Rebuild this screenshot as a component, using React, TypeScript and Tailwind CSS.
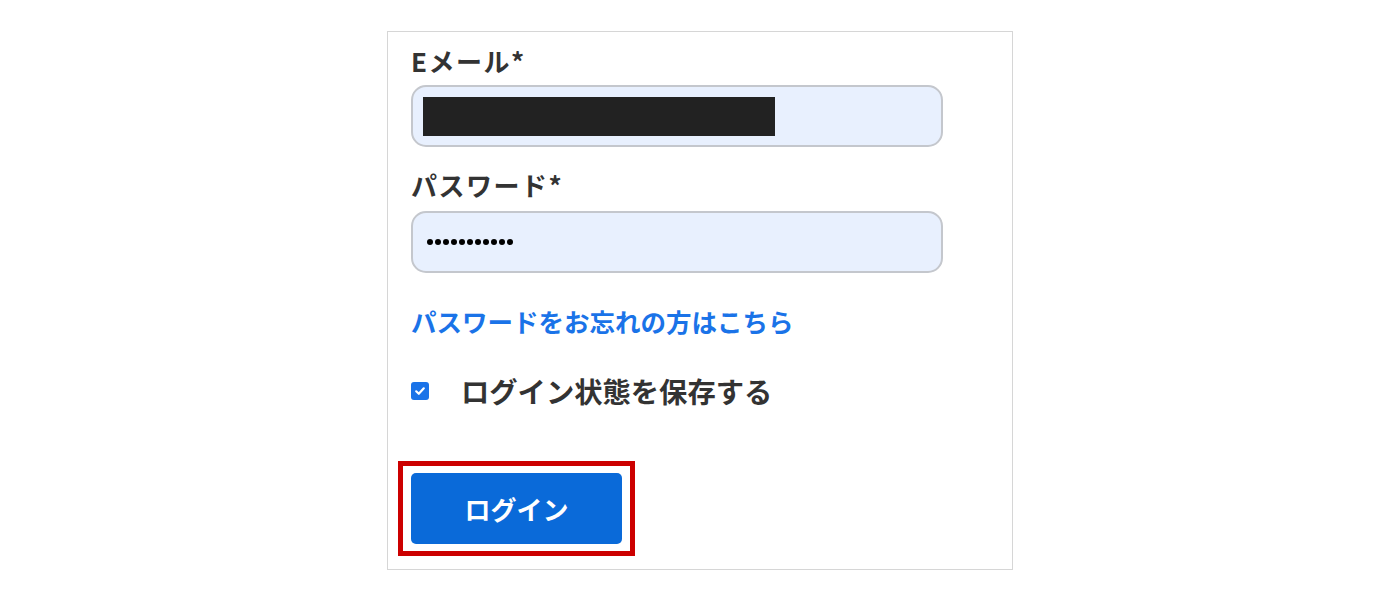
import React from "react";

export default function App() {
  return (
    <div
      className="w-full min-h-[600px] bg-white"
      style={{ fontFamily: '"Noto Sans CJK JP", "Noto Sans", sans-serif' }}
    >
      <div className="pt-[31px]">
        <div className="mx-auto w-[626px] h-[539px] border border-[#d6d6d6] pl-[23px] pt-[13px]">
          <label className="block text-[26px] leading-[32px] tracking-[1.5px] font-bold text-[#333333] mb-[8px]">
            Eメール*
          </label>
          <div className="w-[532px] h-[62px] rounded-[15px] border-2 border-[#c4c7cd] bg-[#e8f0fe] flex items-center pl-[10px]">
            <div className="w-[352px] h-[39px] bg-[#222222]" />
          </div>

          <label className="block mt-[22px] text-[26px] leading-[32px] tracking-[1.5px] font-bold text-[#333333] mb-[10px]">
            パスワード*
          </label>
          <div className="w-[532px] h-[62px] rounded-[15px] border-2 border-[#c4c7cd] bg-[#e8f0fe] flex items-center pl-[14px]">
            <div className="flex gap-[2px]">
              {Array.from({ length: 11 }).map((_, i) => (
                <span key={i} className="block w-[6px] h-[6px] rounded-full bg-black" />
              ))}
            </div>
          </div>

          <a className="block mt-[32px] text-[25.5px] leading-[32px] font-bold text-[#1a73e8]">
            パスワードをお忘れの方はこちら
          </a>

          <div className="mt-[38px] flex items-center h-[32px]">
            <span className="w-[18px] h-[18px] rounded-[3px] bg-[#1a73e8] flex items-center justify-center">
              <svg width="12" height="12" viewBox="0 0 12 12" fill="none">
                <path d="M2.2 6.3 L4.8 8.8 L9.8 3.3" stroke="white" strokeWidth="2.2" strokeLinecap="round" strokeLinejoin="round" />
              </svg>
            </span>
            <span className="ml-[32px] text-[28.3px] leading-[32px] font-bold text-[#333333]">
              ログイン状態を保存する
            </span>
          </div>

          <div className="mt-[54px] ml-[-13px] flex w-fit border-[5px] border-[#cc0000] px-[8px] py-[7px]">
            <button className="block w-[211px] h-[71px] rounded-[5px] bg-[#0a6ad9] text-white text-[26px] font-bold">
              ログイン
            </button>
          </div>
        </div>
      </div>
    </div>
  );
}
